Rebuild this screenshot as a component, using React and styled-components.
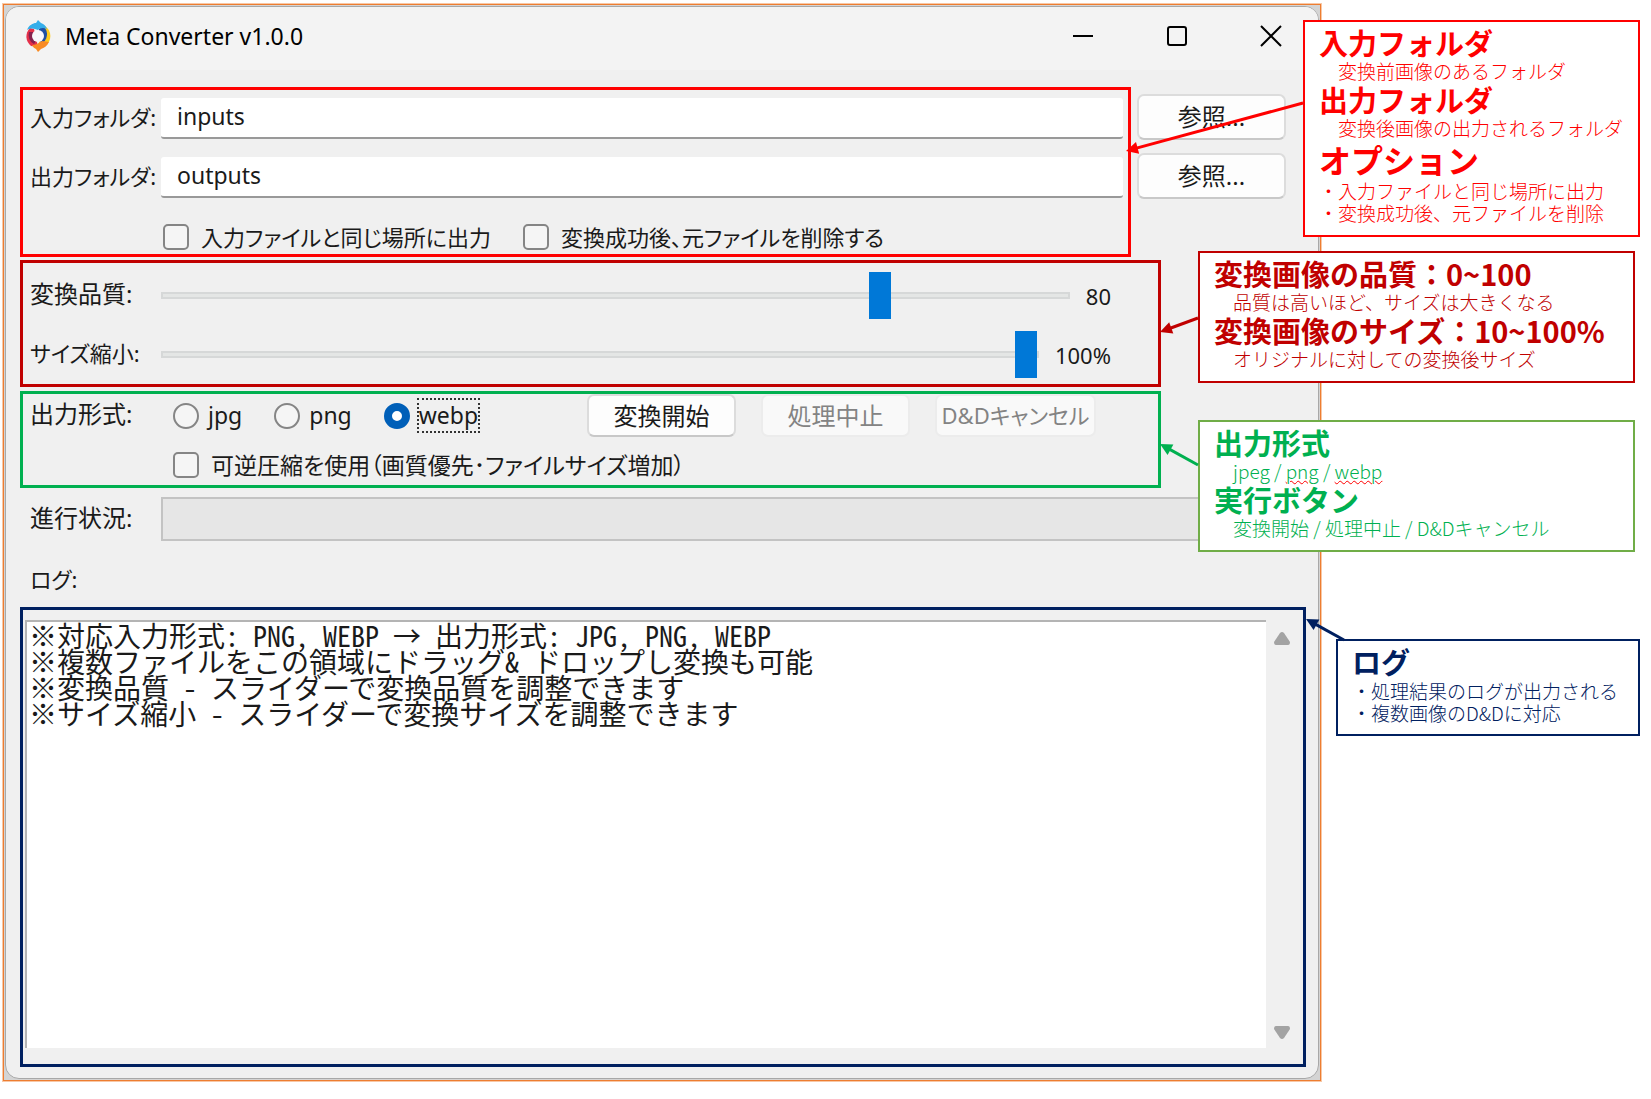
import React, { useState } from "react";
import styled, { createGlobalStyle } from "styled-components";

const LOG_TEXT = [
  "※対応入力形式: PNG, WEBP → 出力形式: JPG, PNG, WEBP",
  "※複数ファイルをこの領域にドラッグ＆ ドロップし変換も可能",
  "※変換品質 - スライダーで変換品質を調整できます",
  "※サイズ縮小 - スライダーで変換サイズを調整できます",
].join("\n");

const FORMATS = ["jpg", "png", "webp"];

const ARROWS = [
  { color: "#ff0000", from: [203, 103], to: [26, 151] },
  { color: "#c00000", from: [98, 318], to: [60, 332] },
  { color: "#00b050", from: [98, 465], to: [60, 444] },
  { color: "#002060", from: [244, 640], to: [206, 619] },
];

const AppLogo = () => (
  <svg width="26" height="32" viewBox="0 0 26 32" aria-hidden="true">
    <path d="M5 8 A12 12 0 0 0 6 26 L13 27 L9 9Z" fill="#e5304a" />
    <path d="M4 12 A10 10 0 0 0 9 24 L11 21 L8 12Z" fill="#86204f" />
    <path d="M20 6 A12 12 0 0 1 20 26 L13 27 L17 9Z" fill="#fdc81e" />
    <path d="M17 6 C23 9 24 17 18 23 L13 20 L14 9Z" fill="#1f4fa3" />
    <path d="M2 10 C4 5 8 3 11 3 L13 0 L16 3 C19 4 21 6 22 9 C18 7 15 8 13 10 C9 8 5 8 2 10Z" fill="#35aeea" />
    <path d="M7 25 C11 25 14 23 17 21 L24 22 C22 26 19 28 16 29 L13 32 L11 29 C9 28 8 27 7 25Z" fill="#f98b24" />
    <circle cx="13" cy="16" r="6" fill="#f8f6fb" />
  </svg>
);

const Arrow = ({ color, from, to }) => {
  const [x, y] = to;
  const angle = (Math.atan2(y - from[1], x - from[0]) * 180) / Math.PI;
  const length = Math.hypot(x - from[0], y - from[1]);

  return (
    <g transform={`translate(${x} ${y}) rotate(${angle})`}>
      <line x1={-length} y1="0" x2="-8" y2="0" stroke={color} strokeWidth="3" />
      <path d="M0 0 L-12 -6 L-12 6 Z" fill={color} />
    </g>
  );
};

const App = () => {
  const [input, setInput] = useState("inputs");
  const [output, setOutput] = useState("outputs");
  const [quality, setQuality] = useState(80);
  const [size, setSize] = useState(100);
  const [format, setFormat] = useState("webp");

  return (
    <Canvas>
      <GlobalStyle />
      <Shot>
        <Window>
          <TitleBar>
            <AppLogo />
            <Title>Meta Converter v1.0.0</Title>
            <CaptionButton aria-label="最小化">
              <svg width="22" height="22" viewBox="0 0 22 22" fill="none" stroke="#000" strokeWidth="2">
                <path d="M1 11 H21" />
              </svg>
            </CaptionButton>
            <CaptionButton aria-label="最大化">
              <svg width="22" height="22" viewBox="0 0 22 22" fill="none" stroke="#000" strokeWidth="2">
                <rect x="2" y="2" width="18" height="18" rx="2" />
              </svg>
            </CaptionButton>
            <CaptionButton aria-label="閉じる">
              <svg width="22" height="22" viewBox="0 0 22 22" fill="none" stroke="#000" strokeWidth="2">
                <path d="M1 1 L21 21 M21 1 L1 21" />
              </svg>
            </CaptionButton>
          </TitleBar>

          <Body>
            <FolderSection>
              <FolderFrame>
                <Row>
                  <Label htmlFor="input">入力フォルダ:</Label>
                  <TextInput id="input" value={input} onChange={(e) => setInput(e.target.value)} />
                </Row>
                <Row>
                  <Label htmlFor="output">出力フォルダ:</Label>
                  <TextInput id="output" value={output} onChange={(e) => setOutput(e.target.value)} />
                </Row>
                <OptionRow>
                  <Choice>
                    <Check type="checkbox" />
                    入力ファイルと同じ場所に出力
                  </Choice>
                  <Choice>
                    <Check type="checkbox" />
                    変換成功後、元ファイルを削除する
                  </Choice>
                </OptionRow>
              </FolderFrame>
              <BrowseColumn>
                <Button>参照...</Button>
                <Button>参照...</Button>
              </BrowseColumn>
            </FolderSection>

            <SliderFrame>
              <Row>
                <Label htmlFor="quality" $large>変換品質:</Label>
                <Slider
                  id="quality"
                  type="range"
                  min="0"
                  max="100"
                  value={quality}
                  onChange={(e) => setQuality(e.target.value)}
                />
                <Value htmlFor="quality">{quality}</Value>
              </Row>
              <Row>
                <Label htmlFor="size">サイズ縮小:</Label>
                <Slider
                  id="size"
                  type="range"
                  min="10"
                  max="100"
                  value={size}
                  onChange={(e) => setSize(e.target.value)}
                />
                <Value htmlFor="size">{size}%</Value>
              </Row>
            </SliderFrame>

            <FormatFrame>
              <Row>
                <Label as="span" $large>出力形式:</Label>
                <RadioGroup role="radiogroup" aria-label="出力形式">
                  {FORMATS.map((name) => (
                    <RadioLabel key={name}>
                      <Radio
                        type="radio"
                        name="format"
                        checked={format === name}
                        onChange={() => setFormat(name)}
                      />
                      <RadioText $focused={format === name}>{name}</RadioText>
                    </RadioLabel>
                  ))}
                </RadioGroup>
                <Actions>
                  <Button>変換開始</Button>
                  <Button disabled>処理中止</Button>
                  <Button disabled $wide>
                    D&amp;Dキャンセル
                  </Button>
                </Actions>
              </Row>
              <LosslessRow>
                <Choice>
                  <Check type="checkbox" />
                  可逆圧縮を使用（画質優先･ファイルサイズ増加）
                </Choice>
              </LosslessRow>
            </FormatFrame>

            <ProgressRow>
              <Label as="span" id="progress" $large>進行状況:</Label>
              <Progress role="progressbar" aria-labelledby="progress" />
            </ProgressRow>

            <LogLabel htmlFor="log">ログ:</LogLabel>
            <LogFrame>
              <Log id="log" readOnly value={LOG_TEXT} />
              <ScrollBar>
                <ScrollButton aria-label="上へ">
                  <svg width="18" height="13" viewBox="0 0 18 13">
                    <path d="M7 1 Q9 -1 11 1 L17 10 Q17 13 15 13 H3 Q1 13 1 10Z" fill="#a3a3a3" />
                  </svg>
                </ScrollButton>
                <ScrollButton aria-label="下へ">
                  <svg width="18" height="13" viewBox="0 0 18 13">
                    <path d="M7 12 Q9 14 11 12 L17 3 Q17 0 15 0 H3 Q1 0 1 3Z" fill="#a3a3a3" />
                  </svg>
                </ScrollButton>
              </ScrollBar>
            </LogFrame>
          </Body>
        </Window>
      </Shot>

      <Annotations>
        <Callout $color="#ff0000" $top={20} $right={11} $width={337} $height={217}>
          <CalloutTitle>入力フォルダ</CalloutTitle>
          <CalloutText>変換前画像のあるフォルダ</CalloutText>
          <CalloutTitle>出力フォルダ</CalloutTitle>
          <CalloutText>変換後画像の出力されるフォルダ</CalloutText>
          <CalloutTitle $large>オプション</CalloutTitle>
          <CalloutList>
            <li>・入力ファイルと同じ場所に出力</li>
            <li>・変換成功後、元ファイルを削除</li>
          </CalloutList>
        </Callout>
        <Callout $color="#c00000" $top={251} $right={16} $width={437} $height={132}>
          <CalloutTitle>変換画像の品質：0~100</CalloutTitle>
          <CalloutText>品質は高いほど、サイズは大きくなる</CalloutText>
          <CalloutTitle>変換画像のサイズ：10~100%</CalloutTitle>
          <CalloutText>オリジナルに対しての変換後サイズ</CalloutText>
        </Callout>
        <Callout $color="#00b050" $border="#70ad47" $top={420} $right={16} $width={437} $height={132}>
          <CalloutTitle>出力形式</CalloutTitle>
          <CalloutText>
            jpeg / <Misspelt>png</Misspelt> / <Misspelt>webp</Misspelt>
          </CalloutText>
          <CalloutTitle>実行ボタン</CalloutTitle>
          <CalloutText>変換開始 / 処理中止 / D&amp;Dキャンセル</CalloutText>
        </Callout>
        <Callout $color="#002060" $top={639} $right={11} $width={304} $height={97}>
          <CalloutTitle>ログ</CalloutTitle>
          <CalloutList>
            <li>・処理結果のログが出力される</li>
            <li>・複数画像のD&amp;Dに対応</li>
          </CalloutList>
        </Callout>
        <ArrowLayer width="551" height="760" viewBox="0 0 551 760" aria-hidden="true">
          {ARROWS.map((arrow) => (
            <Arrow key={arrow.color} {...arrow} />
          ))}
        </ArrowLayer>
      </Annotations>
    </Canvas>
  );
};

const GlobalStyle = createGlobalStyle`
  * {
    box-sizing: border-box;
  }

  body {
    margin: 0;
    background-color: #ffffff;
    color: #1a1a1a;
    font-family: "Noto Sans", "Noto Sans CJK JP", sans-serif;
    font-size: 22px;
    font-feature-settings: "palt";
  }

  button, input, textarea {
    font: inherit;
    color: inherit;
    font-feature-settings: inherit;
  }
`;

const Canvas = styled.div`
  position: relative;
  min-width: 1300px;
  padding: 4px 330px 18px 3px;
`;

const Shot = styled.div`
  padding: 1px;
  border: 1px solid #ed7d31;
  background-color: #d4d4d4;
  box-shadow: 0 0 0 1px #f8c8a6;
`;

const Window = styled.main`
  border: 1px solid #a8a8a8;
  border-radius: 14px;
  background-color: #f0f0f0;
  overflow: hidden;
`;

const TitleBar = styled.header`
  display: flex;
  align-items: center;
  height: 63px;
  padding: 0 0 5px 19px;
  background-color: #f3f3f3;
`;

const Title = styled.h1`
  flex: 1;
  margin: 0 0 0 14px;
  color: #000000;
  font-size: 23px;
  font-weight: 400;
`;

const CaptionButton = styled.button`
  display: flex;
  justify-content: center;
  align-items: center;
  width: 94px;
  height: 100%;
  padding: 0;
  border: 0;
  background: none;
`;

const Body = styled.div`
  display: flex;
  flex-direction: column;
  padding: 17px 12px 11px 14px;
`;

const Frame = styled.section`
  display: flex;
  flex-direction: column;
  border: 3px solid;
`;

const FolderSection = styled.div`
  display: flex;
  gap: 6px;
  padding-right: 20px;
`;

const FolderFrame = styled(Frame)`
  flex: 1;
  gap: 18px;
  padding: 8px 5px 4px 7px;
  border-color: #ff0000;
`;

const SliderFrame = styled(Frame)`
  gap: 12px;
  margin: 3px 145px 0 0;
  padding: 9px 47px 6px 7px;
  border-color: #c00000;
`;

const FormatFrame = styled(Frame)`
  gap: 15px;
  margin: 4px 145px 0 0;
  padding: 0 62px 7px 7px;
  border-color: #00b050;
`;

const Row = styled.div`
  display: flex;
  align-items: center;
`;

const Label = styled.label`
  flex: none;
  width: 131px;
  padding-bottom: 3px;
  font-size: ${({ $large }) => ($large ? "24px" : "22px")};
  line-height: 26px;
  white-space: nowrap;
`;

const TextInput = styled.input`
  flex: 1;
  min-width: 0;
  height: 41px;
  padding: 0 16px 4px;
  border: 0;
  border-bottom: 2px solid #999999;
  border-radius: 3px;
  background-color: #ffffff;
  font-size: 23px;
`;

const OptionRow = styled.div`
  display: flex;
  gap: 32px;
  margin: 8px 0 0 133px;
`;

const LosslessRow = styled.div`
  display: flex;
  margin-left: 143px;
  font-size: 23px;
`;

const Choice = styled.label`
  display: flex;
  align-items: center;
  gap: 12px;
  line-height: 26px;
  white-space: nowrap;
`;

const Check = styled.input`
  appearance: none;
  width: 26px;
  height: 26px;
  margin: 0;
  border: 2px solid #858585;
  border-radius: 5px;
  background-color: #f5f5f5;

  &:checked {
    background-color: #005fb8;
  }
`;

const BrowseColumn = styled.div`
  display: flex;
  flex-direction: column;
  gap: 13px;
  padding-top: 7px;
`;

const Button = styled.button`
  width: ${({ $wide }) => ($wide ? "161px" : "149px")};
  height: 46px;
  padding: 0 0 3px;
  border: 2px solid #dcdcdc;
  border-bottom-color: #c8c8c8;
  border-radius: 7px;
  background-color: #fdfdfd;
  font-size: ${({ $wide }) => ($wide ? "22px" : "24px")};
  white-space: nowrap;

  &:disabled {
    border-color: #ececec;
    background-color: #f9f9f9;
    color: #838383;
  }
`;

const Slider = styled.input`
  flex: 1;
  appearance: none;
  min-width: 0;
  height: 47px;
  margin: 0;
  background: none;

  &::-webkit-slider-runnable-track {
    height: 7px;
    border: 2px solid #d6d8d8;
    background-color: #e4e6e5;
  }

  &::-webkit-slider-thumb {
    appearance: none;
    width: 22px;
    height: 47px;
    margin-top: -22px;
    background-color: #0078d7;
  }
`;

const Value = styled.output`
  margin-left: 16px;
`;

const RadioGroup = styled.div`
  display: flex;
  flex: 1;
  gap: 30px;
  padding-left: 12px;
`;

const RadioLabel = styled.label`
  display: flex;
  align-items: center;
  gap: 7px;
`;

const Radio = styled.input`
  appearance: none;
  width: 26px;
  height: 26px;
  margin: 0;
  border: 2px solid #858585;
  border-radius: 50%;
  background-color: #f5f5f5;

  &:checked {
    border: 8px solid #005fb8;
    background-color: #ffffff;
  }
`;

const RadioText = styled.span`
  height: 35px;
  border: 2px dotted ${({ $focused }) => ($focused ? "#333333" : "transparent")};
  font-size: 23px;
  line-height: 30px;
`;

const Actions = styled.div`
  display: flex;
  gap: 25px;

  ${Button} {
    height: 43px;
  }
`;

const ProgressRow = styled(Row)`
  margin-top: 9px;
  padding: 0 21px 0 10px;
`;

const Progress = styled.div`
  flex: 1;
  height: 44px;
  border: 2px solid #c3c3c3;
  background-color: #e6e6e6;
`;

const LogLabel = styled.label`
  padding: 25px 0 15px 10px;
  line-height: 26px;
`;

const LogFrame = styled(Frame)`
  flex-direction: row;
  padding: 10px 0 16px 2px;
  border-color: #002060;
`;

const Log = styled.textarea`
  flex: 1;
  min-width: 0;
  height: 428px;
  padding: 0 2px;
  border: 0;
  border-top: 2px solid #b4b4b4;
  border-left: 2px solid #b4b4b4;
  background-color: #ffffff;
  font-family: "Noto Sans CJK JP", monospace;
  font-size: 28px;
  line-height: 26px;
  font-feature-settings: "hwid";
  white-space: pre;
  overflow: hidden;
  resize: none;
  outline: none;
`;

const ScrollBar = styled.div`
  display: flex;
  flex-direction: column;
  justify-content: space-between;
  width: 37px;
  padding: 12px 0 9px 7px;
`;

const ScrollButton = styled.button`
  display: flex;
  width: 18px;
  padding: 0;
  border: 0;
  background: none;
`;

/* Notes lie over the window and stay tied to the right edge of the page. */
const Annotations = styled.aside`
  position: absolute;
  top: 0;
  right: 0;
  width: 551px;
`;

const Callout = styled.div`
  position: absolute;
  top: ${({ $top }) => $top}px;
  right: ${({ $right }) => $right}px;
  width: ${({ $width }) => $width}px;
  min-height: ${({ $height }) => $height}px;
  padding: 4px 0 4px 14px;
  border: 2px solid ${({ $border, $color }) => $border || $color};
  background-color: #ffffff;
  color: ${({ $color }) => $color};
  font-family: "Noto Sans CJK JP", sans-serif;
  font-feature-settings: normal;
  white-space: nowrap;
`;

const CalloutTitle = styled.h2`
  margin: 0;
  font-size: ${({ $large }) => ($large ? "32px" : "29px")};
  font-weight: 700;
  line-height: ${({ $large }) => ($large ? "38px" : "33px")};
`;

const CalloutText = styled.p`
  margin: 0;
  padding-left: 19px;
  font-size: 19px;
  font-weight: 300;
  line-height: 24px;
`;

const CalloutList = styled.ul`
  margin: 2px 0 0;
  padding: 0;
  list-style: none;
  font-size: 19px;
  font-weight: 300;
  line-height: 22px;
`;

const Misspelt = styled.span`
  text-decoration: underline wavy #ff0000 1px;
`;

const ArrowLayer = styled.svg`
  position: absolute;
  top: 0;
  left: 0;
  pointer-events: none;
`;

export default App;
